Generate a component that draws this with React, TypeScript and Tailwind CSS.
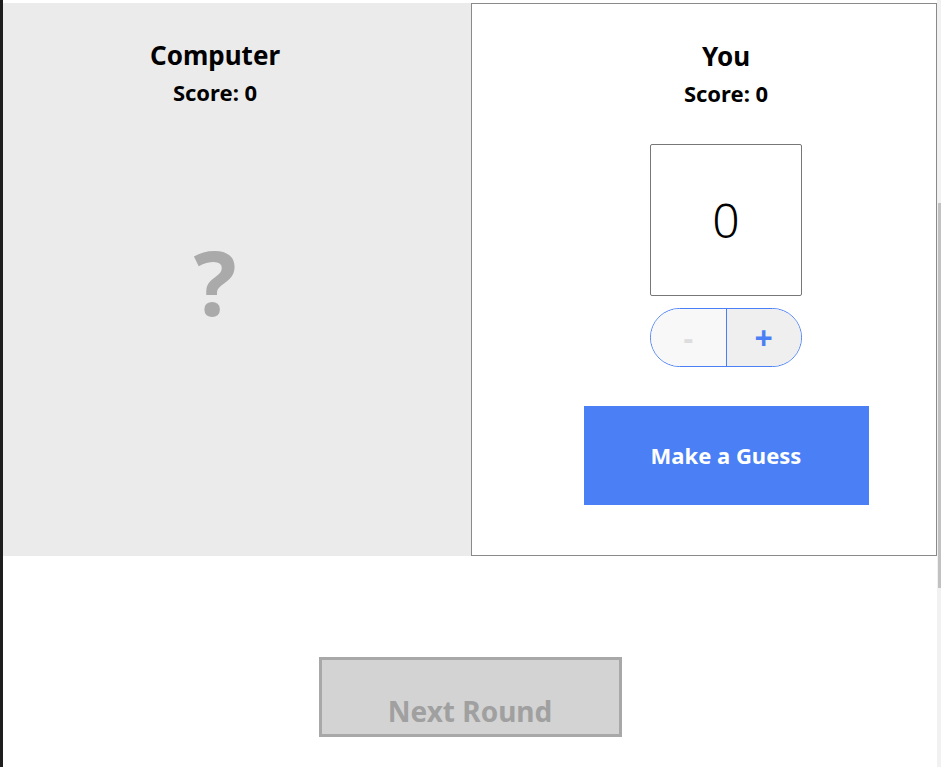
import { useState } from "react";

const font = { fontFamily: '"Noto Sans", "Open Sans", sans-serif' };

const App = () => {
  const [guess, setGuess] = useState(0);

  return (
    <div className="flex min-h-[767px] w-[941px] bg-white text-black" style={font}>
      <div className="w-[3px] shrink-0 bg-[#1e1e1e]" />

      <div className="flex-1 pt-[3px]">
        <div className="flex h-[553px]">
          {/* computer side */}
          <section className="flex w-[468px] flex-col items-center bg-[#ebebeb] pr-[44px] pt-[36px]">
            <h2 className="text-[26px] font-bold leading-[32px]">Computer</h2>
            <p className="mt-[7px] text-[22px] font-bold leading-[28px]">Score: 0</p>
            <div className="mt-[130px] text-[90px] font-bold leading-none text-[#aaaaaa]">?</div>
          </section>

          {/* player side */}
          <section className="flex flex-1 flex-col items-center border border-[#8a8a8a] pl-[44px] pt-[36px]">
            <h2 className="text-[26px] font-bold leading-[32px]">You</h2>
            <p className="mt-[7px] text-[22px] font-bold leading-[28px]">Score: 0</p>

            <div className="mt-[37px] flex h-[152px] w-[152px] items-center justify-center rounded-[2px] border border-[#777777] text-[48px] font-light">
              {guess}
            </div>

            <div className="mt-[12px] flex h-[59px] w-[152px] overflow-hidden rounded-full border border-[#4a7ff5]">
              <button
                className="flex flex-1 items-center justify-center bg-[#f8f8f8] text-[30px] font-bold text-[#dddddd]"
                onClick={() => setGuess((g) => Math.max(0, g - 1))}
              >
                -
              </button>
              <div className="w-px bg-[#4a7ff5]" />
              <button
                className="flex flex-1 items-center justify-center bg-[#efefef] text-[32px] font-bold text-[#4a7ff5]"
                onClick={() => setGuess((g) => g + 1)}
              >
                +
              </button>
            </div>

            <button className="mt-[39px] h-[99px] w-[285px] bg-[#4a7ff5] text-[22px] font-bold text-white">
              Make a Guess
            </button>
          </section>
        </div>

        <div className="flex justify-center pt-[101px]">
          <button className="h-[80px] w-[303px] border-[3px] border-[#a8a8a8] bg-[#d3d3d3] pt-[28px] text-[28px] font-bold text-[#a0a0a0]">
            Next Round
          </button>
        </div>
      </div>

      <div className="w-[4px] shrink-0 bg-[#f1f1f1] pt-[203px]">
        <div className="ml-px h-[385px] w-[3px] bg-[#c1c1c1]" />
      </div>
    </div>
  );
};

export default App;
